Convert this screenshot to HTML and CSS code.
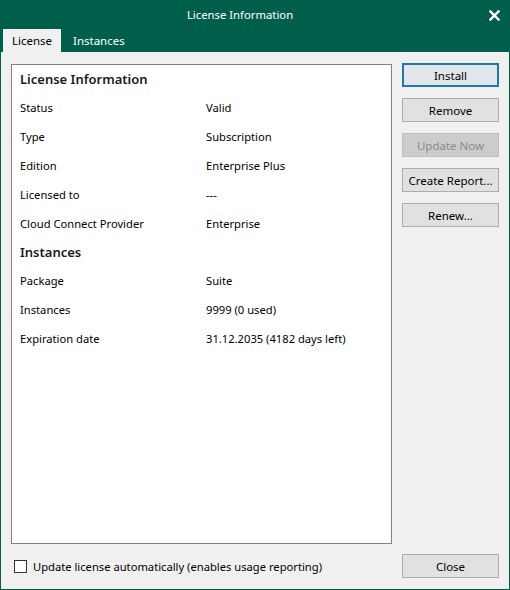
FILE: index.html
```html
<!DOCTYPE html>
<html>
<head>
<meta charset="utf-8">
<link rel="stylesheet" href="styles.css">
</head>
<body>
<div class="window">
  <div class="titlebar">
    <span class="title">License Information</span>
    <svg class="close-x" width="11" height="11" viewBox="0 0 11 11"><path d="M1.5 1.5 L9.5 9.5 M9.5 1.5 L1.5 9.5" stroke="#fff" stroke-width="2.4" stroke-linecap="square"/></svg>
  </div>
  <div class="tabs">
    <div class="tab active">License</div>
    <div class="tab">Instances</div>
  </div>
  <div class="body">
    <div class="main">
      <div class="panel">
        <div class="heading">License Information</div>
        <div class="row"><span class="label">Status</span><span class="value">Valid</span></div>
        <div class="row"><span class="label">Type</span><span class="value">Subscription</span></div>
        <div class="row"><span class="label">Edition</span><span class="value">Enterprise Plus</span></div>
        <div class="row"><span class="label">Licensed to</span><span class="value">---</span></div>
        <div class="row"><span class="label">Cloud Connect Provider</span><span class="value">Enterprise</span></div>
        <div class="heading">Instances</div>
        <div class="row"><span class="label">Package</span><span class="value">Suite</span></div>
        <div class="row"><span class="label">Instances</span><span class="value">9999 (0 used)</span></div>
        <div class="row"><span class="label">Expiration date</span><span class="value">31.12.2035 (4182 days left)</span></div>
      </div>
      <div class="buttons">
        <div class="btn default">Install</div>
        <div class="btn">Remove</div>
        <div class="btn disabled">Update Now</div>
        <div class="btn">Create Report...</div>
        <div class="btn">Renew...</div>
      </div>
    </div>
    <div class="footer">
      <label class="check"><span class="box"></span><span>Update license automatically (enables usage reporting)</span></label>
      <div class="btn">Close</div>
    </div>
  </div>
</div>
</body>
</html>
```
FILE: styles.css
```css
* { box-sizing: border-box; }
html, body { margin: 0; padding: 0; }
body {
  font-family: "Noto Sans", "Open Sans", sans-serif;
  font-size: 11.2px;
  color: #000;
  background: #fff;
}
.window {
  width: 510px;
  height: 590px;
  background: #005f4b;
  display: flex;
  flex-direction: column;
}
.titlebar {
  height: 29px;
  display: flex;
  align-items: center;
  justify-content: center;
  position: relative;
  color: #fff;
  font-size: 11.3px;
}
.title { margin-left: -30px; }
.close-x {
  position: absolute;
  right: 10px;
  top: 10px;
}
.tabs {
  height: 23px;
  display: flex;
  padding-left: 3px;
  color: #fff;
}
.tab {
  padding: 0 9px;
  display: flex;
  align-items: center;
  height: 23px;
  font-size: 11.5px;
}
.tab.active {
  background: #f0f0f0;
  color: #000;
  width: 58px;
}
.tab + .tab { padding-left: 12px; }
.body {
  flex: 1;
  background: #f0f0f0;
  margin: 0 1px 1px;
  display: flex;
  flex-direction: column;
  padding: 11px 10px 11px 10px;
}
.main {
  display: flex;
  gap: 10px;
}
.panel {
  width: 381px;
  height: 480px;
  margin-top: 1px;
  background: #fff;
  border: 1px solid #828282;
  padding: 0 8px;
}
.heading {
  height: 28px;
  line-height: 28px;
  font-size: 13px;
  font-weight: 600;
  color: #1a1a1a;
}
.row {
  height: 29px;
  display: flex;
  align-items: center;
}
.label { width: 186px; }
.buttons {
  display: flex;
  flex-direction: column;
  gap: 11px;
}
.btn {
  width: 97px;
  height: 24px;
  background: #e1e1e1;
  border: 1px solid #adadad;
  display: flex;
  align-items: center;
  justify-content: center;
  font-size: 11.5px;
}
.btn.default {
  border: 2px solid #1f78b4;
  background: #e1e6ea;
}
.btn.disabled {
  background: #cccccc;
  border-color: #bfbfbf;
  color: #8a8a8a;
}
.footer {
  margin-top: auto;
  display: flex;
  align-items: center;
  justify-content: space-between;
}
.check {
  display: flex;
  align-items: center;
  gap: 6px;
  padding-left: 3px;
}
.box {
  width: 13px;
  height: 13px;
  border: 1px solid #333;
  background: #fff;
}
```
